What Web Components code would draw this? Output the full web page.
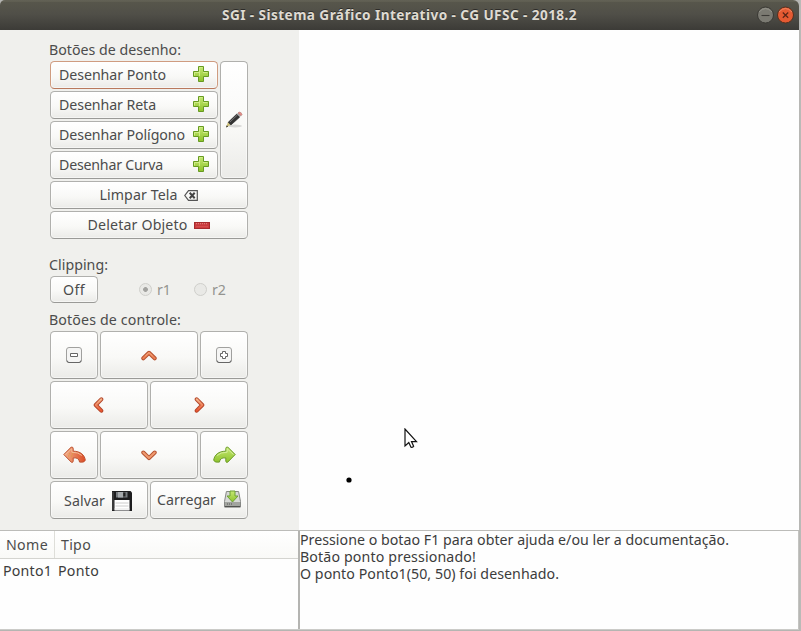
<!DOCTYPE html>
<html lang="pt-BR">
<head>
<meta charset="utf-8">
<title>SGI - Sistema Gráfico Interativo</title>
<style>
html,body{margin:0;width:801px;height:631px;overflow:hidden;background:#b9b9b6}
body{font-family:"Noto Sans","Open Sans",sans-serif;font-size:14.2px;line-height:20px;color:#4c4c4c}
</style>
</head>
<body>
<sgi-window></sgi-window>
<script>
const define = (name, html, setup) => customElements.define(name, class extends HTMLElement {
  constructor() {
    super();
    this.attachShadow({mode: 'open'}).innerHTML = html;
  }
  connectedCallback() { if (setup) setup(this, this.shadowRoot); }
});

/* Single line of text whose tracking is adjusted to a given width. */
define('ui-text', `<style>:host{display:block;white-space:pre;flex:none}span{display:inline-block}</style><span><slot></slot></span>`, (el, root) => {
  const w = parseFloat(el.getAttribute('w'));
  const span = root.querySelector('span');
  const n = el.textContent.length;
  el.style.width = w + 'px';
  span.style.letterSpacing = ((w - span.getBoundingClientRect().width) / n).toFixed(3) + 'px';
});

const plus = 'M5.5 .5h5v5h5v5h-5v5h-5v-5h-5v-5h5z';
const icons = {
  plus: [16,16,`<path d="${plus}" fill="url(#g)" stroke="#679a22"/><path d="M6.5 10V1.5h3M1.5 9.5v-3H6M10 6.5h4.5" fill="none" stroke="#d4ef8c" stroke-width=".9"/>`],
  pencil: [18,18,`<ellipse cx="10" cy="15" rx="7" ry="1.4" fill="#000" opacity=".13"/><path d="M1 16.5 3 11l2.8 2.8z" fill="#cfc27c"/><path d="m1 16.5.8-2.3 1.3 1.3z" fill="#222"/><path d="M3.2 11.3 11.8 3l3 3-8.9 8z" fill="#333" stroke="#1d1d1d" stroke-width=".6"/><path d="m5 11 7.7-7.3" stroke="#777"/><path d="m11.8 3 1.3-1.2 3 2.9L14.8 6z" fill="#aaa"/><path d="m13 1.9 1.1-.9q2.5 0 3 2.7l-1 1z" fill="#e58b86" stroke="#a96d69" stroke-width=".5"/>`],
  clear: [14,11,`<path d="M4.5 .7h8.8v9.6H4.5L.8 5.5z" fill="none" stroke="#555" stroke-width="1.2"/><path d="m5.7 2.8 5 5.4m0-5.4-5 5.4" stroke="#444" stroke-width="2"/>`],
  minus: [16,7,`<rect x=".5" y=".5" width="15" height="6" fill="#c93b3e" stroke="#a62a2d"/><path d="M2 1.7h12" stroke="#e58a87" stroke-dasharray="1 1"/><path d="M2 4.7h12" stroke="#d85050"/>`],
  zoomout: [16,16,`<rect x=".5" y=".5" width="15" height="15" rx="2.5" fill="#f5f5f4" stroke="#a0a09e"/><path d="M1 13.5q0 2 2 2h10q2 0 2-2" fill="none" stroke="#666"/><path d="M4.5 6.5h7v3h-7z" fill="#fff" stroke="#666"/>`],
  zoomin: [16,16,`<rect x=".5" y=".5" width="15" height="15" rx="2.5" fill="#f5f5f4" stroke="#a0a09e"/><path d="M1 13.5q0 2 2 2h10q2 0 2-2" fill="none" stroke="#666"/><path d="M6.5 4.5h3v2h2v3h-2v2h-3v-2h-2v-3h2z" fill="#fff" stroke="#666"/>`],
  up: [16,11,`<path d="m2.3 8.3 5.7-5.5 5.7 5.5" fill="none" stroke="#b4512f" stroke-width="4" stroke-linecap="round" stroke-linejoin="round"/><path d="m2.3 8.3 5.7-5.5 5.7 5.5" fill="none" stroke="#ec8055" stroke-width="2.1" stroke-linecap="round" stroke-linejoin="round"/><path d="m4.3 6 3.7-3.4L11.6 6" fill="none" stroke="#f4ad85"/>`],
  down: [16,11,`<path d="m2.3 2.5 5.7 5.6 5.7-5.6" fill="none" stroke="#b4512f" stroke-width="4" stroke-linecap="round" stroke-linejoin="round"/><path d="m2.3 2.5 5.7 5.6 5.7-5.6" fill="none" stroke="#f09a70" stroke-width="2.1" stroke-linecap="round" stroke-linejoin="round"/>`],
  left: [11,16,`<path d="M8.3 2.3 2.7 8l5.6 5.7" fill="none" stroke="#b34428" stroke-width="4" stroke-linecap="round" stroke-linejoin="round"/><path d="M8.3 2.3 2.7 8l5.6 5.7" fill="none" stroke="url(#a)" stroke-width="2.1" stroke-linecap="round" stroke-linejoin="round"/>`],
  right: [11,16,`<path d="M2.7 2.3 8.3 8l-5.6 5.7" fill="none" stroke="#b34428" stroke-width="4" stroke-linecap="round" stroke-linejoin="round"/><path d="M2.7 2.3 8.3 8l-5.6 5.7" fill="none" stroke="url(#a)" stroke-width="2.1" stroke-linecap="round" stroke-linejoin="round"/>`],
  undo: [23,18,`<path d="M.8 8.5 8.3 1q2 0 1.9 1.5v2.7C17.5 5.2 21.8 9 22.3 14.4q-1.3 2.4-5.7 1.7c-.6-3.2-2.3-4.6-6.4-4.2v3.3Q9.8 17 8.3 16.2z" fill="url(#u)" stroke="#bd5230"/><path d="M2.5 8.5 8.8 2.7v3.5q7 0 10 3.3" fill="none" stroke="#f5bd98"/><path d="M6 7.8h6M5 10h5" stroke="#d8a23b" stroke-dasharray="1 2"/>`],
  redo: [23,18,`<path d="M22.2 8.5 14.7 1q-2 0-1.9 1.5v2.7C5.5 5.2 1.2 9 .7 14.4q1.3 2.4 5.7 1.7c.6-3.2 2.3-4.6 6.4-4.2v3.3q.4 1.8 1.9 1z" fill="url(#g)" stroke="#6c9b2b"/><path d="m20.5 8.5-6.3-5.8v3.5q-7 0-10 3.3" fill="none" stroke="#d6ef9c"/>`],
  save: [20,20,`<path d="M0 0h18.5L20 1.5V20H0z" fill="#1d1d1f"/><path d="M1 1v18" stroke="#555"/><rect x="4" y="1" width="11.5" height="5.5" fill="#777b7f"/><rect x="6" y="1" width="5" height="5.5" fill="#a6aaad"/><rect x="11.2" y="1.5" width="2.3" height="4" fill="#222"/><rect x="2.5" y="9" width="15" height="10.5" fill="#fff"/><path d="M3.5 12h13M3.5 15h13" stroke="#ccc"/><path d="M2.5 18h15" stroke="#e4e4e4"/>`],
  load: [17,18,`<path d="M2.4 1.5h12.2l1.9 10v4.8H.5v-4.8z" fill="#d7d9d6" stroke="#858784"/><path d="M1 12h15v4H1z" fill="#a2a49f"/><path d="M3 14h1m1 0h1m1 0h1" stroke="#555"/><path d="M.5 16.8h16" stroke="#3f403e" stroke-width="1.2"/><path d="M6 1h5v5h3l-5.5 6L3 6h3z" fill="url(#g)" stroke="#6da035"/>`],
};
customElements.define('ui-icon', class extends HTMLElement {
  connectedCallback() {
    const [w, h, body] = icons[this.getAttribute('name')];
    this.attachShadow({mode: 'open'}).innerHTML = `<style>:host{display:block;flex:none}svg{display:block}</style>
    <svg width="${w}" height="${h}" viewBox="0 0 ${w} ${h}"><defs>
    <linearGradient id="g" x2="0" y2="1"><stop stop-color="#c5e873"/><stop offset="1" stop-color="#8fc32c"/></linearGradient>
    <linearGradient id="a" x2="0" y2="1"><stop stop-color="#f5b58b"/><stop offset="1" stop-color="#ea5631"/></linearGradient>
    <linearGradient id="u"><stop stop-color="#f2b08a"/><stop offset="1" stop-color="#dc4c25"/></linearGradient></defs>${body}</svg>`;
  }
});

define('ui-button', `<style>
:host{display:flex;align-items:center;justify-content:center;box-sizing:border-box;min-width:0;border:1px solid #b0b0ad;border-bottom-color:#9a9a97;border-radius:4.5px;background:linear-gradient(#fff,#f9f9f7 55%,#ebebe8);box-shadow:inset 0 0 0 1px #ffffff80}
:host([wide]){justify-content:space-between;padding:0 8px}
:host([focused]){border-color:#cf9c80;border-bottom-color:#b9795d}
</style><slot></slot>`);

define('ui-radio', `<style>
:host{display:flex;align-items:center;gap:5px;color:#949490}
i{display:block;box-sizing:border-box;width:13px;height:13px;border:1px solid #cfcfcb;border-radius:50%;background:#e9e9e6}
:host([checked]) i{background:radial-gradient(circle,#a3a3a0 0 2px,#e9e9e6 2.8px)}
</style><i></i><slot></slot>`);

define('title-bar', `<style>
:host{display:grid;grid-template-columns:1fr auto 1fr;align-items:center;height:30px;width:799px;background:linear-gradient(#5b5a50 0,#686759 1px,#57564b 2px,#504f48 14px,#3c3b37);border-radius:5px 6px 0 0;color:#dfdbd2;font-weight:700;font-size:13.6px;text-shadow:0 -1px #2d2c29}
div{display:flex;justify-content:flex-end;gap:3px;padding-right:5px}svg{display:block}
</style><span></span><ui-text w="355">SGI - Sistema Gráfico Interativo - CG UFSC - 2018.2</ui-text>
<div><svg width="17" height="18"><circle cx="8.5" cy="9" r="8" fill="#7b7a72" stroke="#393833"/><path d="M2 6Q8.5-1 15 6" fill="none" stroke="#96958c"/><path d="M4.5 9.5h8" stroke="#3c3b37" stroke-width="1.1"/></svg>
<svg width="17" height="18"><circle cx="8.5" cy="9" r="8" fill="#e55a32" stroke="#51301f"/><path d="M2 6Q8.5-1 15 6" fill="none" stroke="#f08763"/><path d="m5.8 6.5 5.4 5.2m0-5.2-5.4 5.2" stroke="#592516" stroke-width="1.2"/></svg></div>`);

define('tool-panel', `<style>
:host{display:block;box-sizing:border-box;width:299px;height:500px;padding:10px 51px 0 50px;background:#f0f0ed}
:host>ui-text,.label{margin-left:-1px}
.draw{display:grid;grid-template-columns:168px 28px;grid-auto-rows:28px;gap:2px;margin-top:1px}
.draw ui-icon[name=plus]{margin-bottom:2px}
.draw .pen{grid-column:2;grid-row:1/5}
.draw .full{grid-column:1/3;gap:6px;padding-right:1px}
.clip{display:flex;height:27px;margin:1px 0 7px}
.clip ui-button{width:48px}
.clip ui-radio:nth-child(2){margin-left:41px}.clip ui-radio:nth-child(3){margin-left:23px}
.l2{padding-top:16px}
.ctl{display:grid;grid-template-columns:48px 48px 48px 48px;grid-template-rows:48px 48px 48px 38px;gap:2px;margin-top:1px}
.ctl ui-icon[name=up],.ctl ui-icon[name=down],.ctl ui-icon[name=left]{margin-right:1px}
.s2{grid-column:span 2}
.sv{gap:7px;padding-top:2px;padding-right:2px}.ld{gap:8px;padding-bottom:1px}
.ld ui-icon{margin-bottom:2px}
</style>
<ui-text class="label" w="132">Botões de desenho:</ui-text>
<div class="draw">
<ui-button wide focused><ui-text w="107">Desenhar Ponto</ui-text><ui-icon name="plus"></ui-icon></ui-button>
<ui-button class="pen"><ui-icon name="pencil"></ui-icon></ui-button>
<ui-button wide><ui-text w="97">Desenhar Reta</ui-text><ui-icon name="plus"></ui-icon></ui-button>
<ui-button wide><ui-text w="126">Desenhar Polígono</ui-text><ui-icon name="plus"></ui-icon></ui-button>
<ui-button wide><ui-text w="104">Desenhar Curva</ui-text><ui-icon name="plus"></ui-icon></ui-button>
<ui-button class="full"><ui-text w="78">Limpar Tela</ui-text><ui-icon name="clear"></ui-icon></ui-button>
<ui-button class="full"><ui-text w="100">Deletar Objeto</ui-text><ui-icon name="minus"></ui-icon></ui-button>
</div>
<ui-text class="l2 label" w="59">Clipping:</ui-text>
<div class="clip"><ui-button><ui-text w="22">Off</ui-text></ui-button><ui-radio checked><ui-text w="14">r1</ui-text></ui-radio><ui-radio><ui-text w="14">r2</ui-text></ui-radio></div>
<ui-text class="label" w="132">Botões de controle:</ui-text>
<div class="ctl">
<ui-button><ui-icon name="zoomout"></ui-icon></ui-button><ui-button class="s2"><ui-icon name="up"></ui-icon></ui-button><ui-button><ui-icon name="zoomin"></ui-icon></ui-button>
<ui-button class="s2"><ui-icon name="left"></ui-icon></ui-button><ui-button class="s2"><ui-icon name="right"></ui-icon></ui-button>
<ui-button><ui-icon name="undo"></ui-icon></ui-button><ui-button class="s2"><ui-icon name="down"></ui-icon></ui-button><ui-button><ui-icon name="redo"></ui-icon></ui-button>
<ui-button class="s2 sv"><ui-text w="41">Salvar</ui-text><ui-icon name="save"></ui-icon></ui-button><ui-button class="s2 ld"><ui-text w="59">Carregar</ui-text><ui-icon name="load"></ui-icon></ui-button>
</div>`);

define('draw-canvas', `<style>
:host{display:block;position:relative;width:500px;height:500px;background:#fefefe}
svg{position:absolute}.dot{left:47px;top:447px}.cursor{left:105px;top:398px}
</style><svg class="dot" width="6" height="6"><circle cx="3" cy="3" r="2.6" fill="#000"/></svg>
<svg class="cursor" width="15" height="22"><path d="M1.2 1v17.2l3.9-3.6 2.4 5 2.6-1-2.3-5.2h5z" transform="translate(.5 .5)" fill="#ccc" opacity=".5"/><path d="M1 1v17l3.8-3.4L7 19.2q1.8.5 2.6-1L7.5 13.6h5z" fill="#fff" stroke="#111" stroke-width="1.2"/></svg>`);

define('object-list', `<style>
:host{display:block;box-sizing:border-box;width:300px;height:98px;border-right:2px solid #b4b4b1;background:#fefefe}
.head{display:grid;grid-template-columns:55px 1fr;height:27px;border-bottom:1px solid #d4d4d0;background:linear-gradient(#fff,#f9f9f7)}
.head ui-text{padding-top:4px}.head div:first-child{border-right:1px solid #deded9;padding-left:6px}.head div+div{padding-left:6px}
.row{display:flex;gap:6px;padding:2px 3px;color:#3c3c3c}
</style><div class="head"><div><ui-text w="42">Nome</ui-text></div><div><ui-text w="30">Tipo</ui-text></div></div>
<div class="row"><ui-text w="49">Ponto1</ui-text><ui-text w="41">Ponto</ui-text></div>`);

define('log-view', `<style>
:host{display:block;box-sizing:border-box;flex:1;height:98px;border-right:1px solid #c4c4c1;background:#fefefe;line-height:17px;color:#3c3c3c}
</style><ui-text w="429">Pressione o botao F1 para obter ajuda e/ou ler a documentação.</ui-text><ui-text w="176">Botão ponto pressionado!</ui-text><ui-text w="259">O ponto Ponto1(50, 50) foi desenhado.</ui-text>`);

define('sgi-window', `<style>
:host{display:block;width:801px;height:631px;background:linear-gradient(90deg,#b5b5b2 799px,#bcbcb9)}
.row{display:flex;width:799px}.bottom{border-top:1px solid #bcbcb9;border-bottom:1px solid #cbcbc8}
</style><title-bar></title-bar>
<div class="row"><tool-panel></tool-panel><draw-canvas></draw-canvas></div>
<div class="row bottom"><object-list></object-list><log-view></log-view></div>`);
</script>
</body>
</html>
